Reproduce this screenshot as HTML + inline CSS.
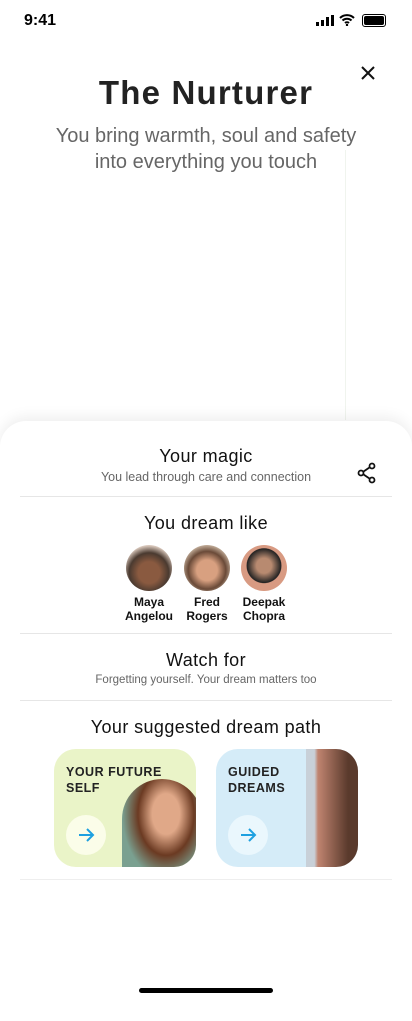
<!DOCTYPE html><html><head><style>
body{margin:0;width:412px;height:1002px;background:#fff;font-family:"Liberation Sans",sans-serif;position:relative;overflow:hidden}
.a{position:absolute}
.c{text-align:center;left:0;width:412px}
.hr{position:absolute;left:20px;width:372px;height:1px;background:#e6e6e6}
.av{position:absolute;width:46px;height:46px;border-radius:50%;top:545px}
.nm{position:absolute;top:595px;width:60px;text-align:center;font-size:12px;line-height:14px;color:#111;font-weight:bold}
.card{position:absolute;top:749px;width:142px;height:118px;border-radius:22px;overflow:hidden}
.ct{position:absolute;left:12px;top:15px;font-size:12.5px;font-weight:bold;line-height:16px;color:#222;letter-spacing:.5px}
.btn{position:absolute;left:12px;top:66px;width:40px;height:40px;border-radius:50%}
.h{font-size:18px;color:#111;letter-spacing:.4px}
</style></head><body>
<div class="a" style="left:24px;top:12px;font-size:16px;font-weight:bold">9:41</div>
<div class="a" style="left:316px;top:15px;width:18px;height:11px">
<div class="a" style="left:0;top:7px;width:3px;height:4px;background:#000"></div><div class="a" style="left:5px;top:5px;width:3px;height:6px;background:#000"></div><div class="a" style="left:10px;top:2px;width:3px;height:9px;background:#000"></div><div class="a" style="left:15px;top:0;width:3px;height:11px;background:#000"></div></div>
<svg class="a" style="left:339px;top:14px" width="16" height="12" viewBox="0 0 16 12"><path d="M1 4a10 10 0 0 1 14 0M3.5 6.5a6.5 6.5 0 0 1 9 0M6 9a3 3 0 0 1 4 0" stroke="#000" stroke-width="2" fill="none"/><circle cx="8" cy="11" r="1.2"/></svg>
<div class="a" style="left:362px;top:14px;width:22px;height:11px;border:1px solid #000;border-radius:3px"><div style="margin:1px;height:9px;background:#000;border-radius:2px"></div></div>
<svg class="a" style="left:360px;top:65px" width="16" height="16"><path d="M2 2L14 14M14 2L2 14" stroke="#111" stroke-width="2"/></svg>
<div class="a c" style="top:74px;font-size:33px;font-weight:bold;color:#222;letter-spacing:1.2px">The Nurturer</div>
<div class="a c" style="top:123px;font-size:20px;line-height:26px;color:#666">You bring warmth, soul and safety<br>into everything you touch</div>
<div class="a" style="left:345px;top:150px;width:1px;height:270px;background:#f0f4ee"></div>
<div class="a" style="left:0;top:421px;width:412px;height:600px;background:#fff;border-radius:26px 26px 0 0;box-shadow:0 -4px 14px rgba(0,0,0,.07)"></div>
<div class="a c h" style="top:446px">Your magic</div>
<div class="a c" style="top:470px;font-size:12.5px;color:#666">You lead through care and connection</div>
<svg class="a" style="left:357px;top:462px" width="20" height="22" viewBox="0 0 20 22"><g stroke="#111" stroke-width="1.8" fill="none"><circle cx="15" cy="4" r="2.5"/><circle cx="4" cy="11" r="2.5"/><circle cx="15" cy="18" r="2.5"/><path d="M6.2 9.8L12.8 5.2M6.2 12.2L12.8 16.8"/></g></svg>
<div class="hr" style="top:496px"></div>
<div class="a c h" style="top:513px">You dream like</div>
<div class="av" style="left:126px;background:radial-gradient(circle at 50% 60%,#8a5a40 30%,#4a3a30 55%,#d9c8bc 75%)"></div>
<div class="av" style="left:184px;background:radial-gradient(circle at 50% 55%,#d8a080 30%,#6a4a38 55%,#c8b4a0 75%)"></div>
<div class="av" style="left:241px;background:radial-gradient(circle at 50% 45%,#b88a70 22%,#222 50%,#d89a82 52%)"></div>
<div class="nm" style="left:119px">Maya<br>Angelou</div>
<div class="nm" style="left:177px">Fred<br>Rogers</div>
<div class="nm" style="left:234px">Deepak<br>Chopra</div>
<div class="hr" style="top:633px"></div>
<div class="a c h" style="top:650px">Watch for</div>
<div class="a c" style="top:674px;font-size:11.5px;color:#666">Forgetting yourself. Your dream matters too</div>
<div class="hr" style="top:700px"></div>
<div class="a c h" style="top:717px">Your suggested dream path</div>
<div class="card" style="left:54px;background:#eaf4c8">
<div class="a" style="left:68px;top:30px;width:80px;height:100px;border-radius:40px 40px 0 0;background:radial-gradient(ellipse at 55% 35%,#e0a888 22%,#6b3a22 45%,#7aa090 70%)"></div>
<div class="ct">YOUR FUTURE<br>SELF</div>
<div class="btn" style="background:#fbfde9"></div>
<svg class="a" style="left:23px;top:77px" width="18" height="18"><path d="M2 9H16M10 3L16 9L10 15" stroke="#1ea0e0" stroke-width="2" fill="none"/></svg>
</div>
<div class="card" style="left:216px;background:#d5ecf8">
<div class="a" style="left:90px;top:0;width:60px;height:118px;background:linear-gradient(90deg,#c8d0d8 0 14%,#c08470 20%,#5a3a2c 70%)"></div>
<div class="ct">GUIDED<br>DREAMS</div>
<div class="btn" style="background:#eaf7fd"></div>
<svg class="a" style="left:23px;top:77px" width="18" height="18"><path d="M2 9H16M10 3L16 9L10 15" stroke="#1ea0e0" stroke-width="2" fill="none"/></svg>
</div>
<div class="hr" style="top:879px;background:#eee"></div>
<div class="a" style="left:139px;top:988px;width:134px;height:5px;border-radius:3px;background:#000"></div>
</body></html>
